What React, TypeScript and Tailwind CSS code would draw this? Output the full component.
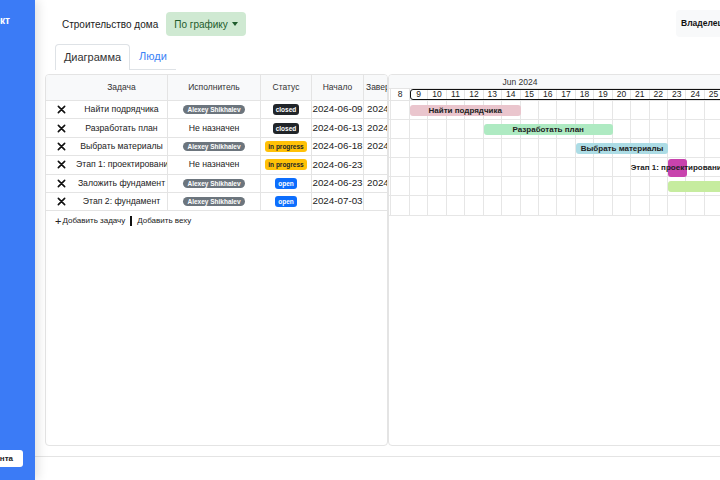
import React from 'react';

type Status = 'closed' | 'in progress' | 'open';

interface Task {
  name: string;
  owner?: string;
  status: Status;
  start: string;
  end?: string;
}

const tasks: Task[] = [
  { name: 'Найти подрядчика', owner: 'Alexey Shikhalev', status: 'closed', start: '2024-06-09', end: '2024-06-14' },
  { name: 'Разработать план', status: 'closed', start: '2024-06-13', end: '2024-06-19' },
  { name: 'Выбрать материалы', owner: 'Alexey Shikhalev', status: 'in progress', start: '2024-06-18', end: '2024-06-22' },
  { name: 'Этап 1: проектирование', status: 'in progress', start: '2024-06-23' },
  { name: 'Заложить фундамент', owner: 'Alexey Shikhalev', status: 'open', start: '2024-06-23', end: '2024-07-05' },
  { name: 'Этап 2: фундамент', owner: 'Alexey Shikhalev', status: 'open', start: '2024-07-03' },
];

const statusClass: Record<Status, string> = {
  closed: 'bg-[#212529] text-white',
  'in progress': 'bg-[#ffc107] text-[#212529]',
  open: 'bg-[#0d6efd] text-white',
};

// gantt geometry
const DAY = 18.45;
const FIRST_DAY = 7;
const OFFSET = -16;
const days = Array.from({ length: 24 }, (_, i) => FIRST_DAY + i);
const dayX = (d: number) => (d - FIRST_DAY) * DAY + OFFSET;

interface Bar {
  row: number;
  from: number;
  to: number;
  color: string;
  label?: string;
  milestone?: boolean;
}

const bars: Bar[] = [
  { row: 0, from: 9, to: 15, color: 'bg-[#eac5cd]', label: 'Найти подрядчика' },
  { row: 1, from: 13, to: 20, color: 'bg-[#aeeac2]', label: 'Разработать план' },
  { row: 2, from: 18, to: 23, color: 'bg-[#acdce5]', label: 'Выбрать материалы' },
  { row: 3, from: 23, to: 24, color: 'bg-[#c843ad]', label: 'Этап 1: проектирование', milestone: true },
  { row: 4, from: 23, to: 36, color: 'bg-[#c6ec9f]', label: 'Заложить фундамент' },
];

const ROW_H = 19.1;

function XIcon() {
  return (
    <svg width="9" height="9" viewBox="0 0 10 10" className="text-[#111]">
      <path d="M1.5 1.5 L8.5 8.5 M8.5 1.5 L1.5 8.5" stroke="currentColor" strokeWidth="1.8" strokeLinecap="round" />
    </svg>
  );
}

function TaskTable() {
  const cell = 'flex items-center justify-center border-r border-[#e4e4e4] overflow-hidden whitespace-nowrap';
  return (
    <div className="w-[343px] h-full shrink-0 border border-[#e4e4e4] rounded-[4px] overflow-hidden bg-white">
      <div className="grid grid-cols-[30px_92px_93px_51px_52px_60px] h-[26px] bg-[#f8f9fa] border-b border-[#e4e4e4] text-[8.5px] text-[#333]">
        <div />
        <div className={cell}>Задача</div>
        <div className={cell}>Исполнитель</div>
        <div className={cell}>Статус</div>
        <div className={cell}>Начало</div>
        <div className="flex items-center justify-start pl-[2px] whitespace-nowrap overflow-hidden">Завершение</div>
      </div>
      {tasks.map((t) => (
        <div
          key={t.name}
          className="grid grid-cols-[30px_92px_93px_51px_52px_60px] h-[18.4px] border-b border-[#e4e4e4] text-[8.7px] text-[#222]"
        >
          <div className="flex items-center justify-center">
            <XIcon />
          </div>
          <div className={`${cell} !justify-start`}>
            <span className="block w-full text-center overflow-hidden">{t.name}</span>
          </div>
          <div className={cell}>
            {t.owner ? (
              <span className="bg-[#6c757d] text-white text-[6.5px] font-bold rounded-full px-[4px] leading-[9px]">
                {t.owner}
              </span>
            ) : (
              'Не назначен'
            )}
          </div>
          <div className={cell}>
            <span className={`${statusClass[t.status]} text-[6.5px] font-bold rounded-[3px] px-[3px] leading-[11px]`}>
              {t.status}
            </span>
          </div>
          <div className={`${cell} text-[9.8px]`}>{t.start}</div>
          <div className="flex items-center pl-[3px] text-[9.8px] whitespace-nowrap overflow-hidden">{t.end ?? ''}</div>
        </div>
      ))}
      <div className="flex items-center h-[20px] pl-[9px] text-[8px] text-[#222]">
        <span className="text-[11px] leading-none mr-[1px]">+</span>
        <span>Добавить задачу</span>
        <span className="mx-[5px] w-[2px] h-[10px] bg-[#111]" />
        <span>Добавить веху</span>
      </div>
    </div>
  );
}

function Gantt() {
  return (
    <div className="flex-1 -mr-[20px] h-full border border-[#e4e4e4] rounded-[4px] overflow-hidden bg-white">
      <div className="relative h-[13px] bg-[#f8f9fa] text-[8.5px] text-[#333]">
        <span className="absolute left-[131px] top-[1px] -translate-x-1/2 whitespace-nowrap">Jun 2024</span>
      </div>
      <div className="relative h-[13px] border-y border-[#e4e4e4] overflow-hidden">
        <div className="absolute top-0 h-full flex" style={{ left: OFFSET }}>
          {days.map((d) => (
            <div
              key={d}
              className="w-[18.45px] h-full shrink-0 border-r border-[#e4e4e4] flex items-center justify-center text-[8.5px] text-[#222]"
            >
              {d > 30 ? d - 30 : d}
            </div>
          ))}
        </div>
        <div
          className="absolute top-0 h-[11px] w-[400px] border-[1.5px] border-[#111] rounded-[3px]"
          style={{ left: dayX(9) }}
        />
      </div>
      <div className="relative h-[115px] overflow-hidden">
        <div className="absolute inset-y-0 flex" style={{ left: OFFSET }}>
          {days.map((d) => (
            <div key={d} className="w-[18.45px] h-full shrink-0 border-r border-[#e6e6e6]" />
          ))}
        </div>
        <div className="absolute inset-0 flex flex-col">
          {tasks.map((t) => (
            <div key={t.name} className="h-[19.1px] shrink-0 border-b border-[#e6e6e6]" />
          ))}
        </div>
        {bars.map((b) => {
          const left = dayX(b.from);
          const width = (b.to - b.from) * DAY;
          if (b.milestone) {
            return (
              <React.Fragment key={b.label}>
                <div
                  className={`absolute ${b.color} rounded-[3px]`}
                  style={{ left, width, top: b.row * ROW_H + 1, height: 18 }}
                />
                <span
                  className="absolute -translate-x-1/2 whitespace-nowrap text-[8px] font-bold text-[#222] leading-[19px]"
                  style={{ left: left + width / 2 + 1, top: b.row * ROW_H }}
                >
                  {b.label}
                </span>
              </React.Fragment>
            );
          }
          return (
            <div
              key={b.label}
              className={`absolute ${b.color} rounded-[3px] flex items-center justify-center text-[8px] font-bold text-[#222] whitespace-nowrap`}
              style={{ left, width, top: b.row * ROW_H + 4, height: 11 }}
            >
              {b.label}
            </div>
          );
        })}
      </div>
    </div>
  );
}

export default function App() {
  return (
    <div className="flex w-[720px] h-[480px] overflow-hidden bg-white font-['Liberation_Sans',Arial,sans-serif]">
      <aside className="relative z-10 w-[35px] shrink-0 bg-[#3b7bf6] flex flex-col justify-between overflow-hidden shadow-[3px_0_10px_rgba(0,0,0,0.12)]">
        <div className="flex justify-end pr-[25px] pt-[13px]">
          <span className="text-white text-[10px] font-bold whitespace-nowrap">Проект</span>
        </div>
        <div className="flex justify-end pr-[12px] pb-[13px]">
          <span className="shrink-0 bg-white rounded-[3px] h-[17px] px-[10px] flex items-center text-[8px] font-bold text-[#222] whitespace-nowrap">
            Диаграмма Ганта
          </span>
        </div>
      </aside>

      <main className="flex-1 min-w-0 flex flex-col overflow-hidden">
        <div className="h-[44px] flex items-start pt-[12px] pl-[27px] shrink-0">
          <div className="h-[24px] flex items-center text-[10px] text-[#222]">Строительство дома</div>
          <button className="ml-[8px] h-[24px] px-[8px] rounded-[4px] bg-[#cfe9d2] text-[#1e5b2c] text-[10px] flex items-center gap-[4px]">
            По графику
            <span className="w-0 h-0 border-x-[3.5px] border-x-transparent border-t-[4px] border-t-[#1e5b2c]" />
          </button>
          <div className="ml-auto -mt-[2px] -mr-[20px] w-[64px] h-[27px] bg-[#f8f9fa] rounded-[4px] flex items-center pl-[5px] text-[8.5px] font-bold text-[#111] whitespace-nowrap overflow-hidden">
            Владелец
          </div>
        </div>

        <div className="h-[26px] flex items-end pl-[20px] shrink-0">
          <div className="w-[75px] h-[26px] border border-b-0 border-[#dee2e6] rounded-t-[4px] flex items-center justify-center text-[11px] text-[#333]">
            Диаграмма
          </div>
          <div className="w-[46px] h-[26px] border-b border-[#dee2e6] flex items-center justify-center text-[11px] text-[#3b82f6]">
            Люди
          </div>
        </div>

        <div className="mt-[4px] h-[372px] flex pl-[10px] shrink-0">
          <TaskTable />
          <Gantt />
        </div>

        <div className="mt-[10px] flex-1 border-t border-[#e4e4e4] bg-white" />
      </main>
    </div>
  );
}
